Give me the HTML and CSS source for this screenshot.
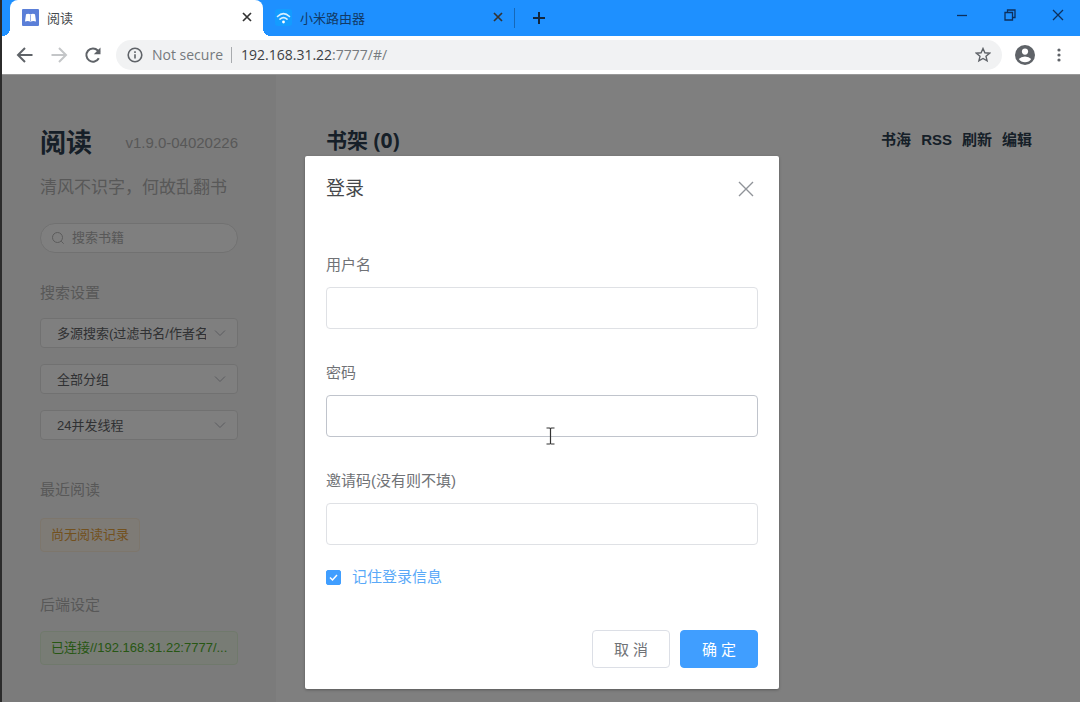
FILE: index.html
```html
<!DOCTYPE html>
<html lang="zh-CN">
<head>
<meta charset="utf-8">
<meta name="viewport" content="width=device-width, initial-scale=1">
<title>阅读</title>
<link rel="stylesheet" href="styles.css">
</head>
<body>
<header class="browser">
  <div class="tabstrip">
    <div class="tab tab-active">
      <svg class="favicon" viewBox="0 0 17 17" aria-hidden="true"><rect width="17" height="17" rx="1" fill="#5b7fd8"/><path d="M3 12.600L4 5.200Q6.500 4 8.500 5.600 10.500 4 13 5.200L14 12.600Q11 11.400 8.500 12.800 6 11.400 3 12.600z" fill="#fff"/><path d="M8.500 6v6.500" stroke="#8ea8e6" stroke-width=".9"/></svg>
      <span class="tab-title">阅读</span>
      <button class="tab-close" type="button" aria-label="关闭标签页"><svg viewBox="0 0 10 10"><path d="M1 1l8 8M9 1L1 9"/></svg></button>
    </div>
    <div class="tab">
      <svg class="favicon" viewBox="0 0 17 17" aria-hidden="true"><rect width="17" height="17" rx="3" fill="#149cff"/><path d="M2.500 7.500q6-5.600 12 0M5 10.200q3.500-3.200 7 0" fill="none" stroke="#d8f0ff" stroke-width="1.600" stroke-linecap="round"/><circle cx="8.500" cy="13" r="1.400" fill="#fff"/></svg>
      <span class="tab-title">小米路由器</span>
      <button class="tab-close" type="button" aria-label="关闭标签页"><svg viewBox="0 0 10 10"><path d="M1 1l8 8M9 1L1 9"/></svg></button>
    </div>
    <span class="tab-divider"></span>
    <button class="tab-new" type="button" aria-label="新标签页"><svg viewBox="0 0 14 14"><path d="M7 1v12M1 7h12"/></svg></button>
    <div class="window-buttons">
      <button type="button" aria-label="最小化"><svg viewBox="0 0 12 12"><path d="M1 6.500h10"/></svg></button>
      <button type="button" aria-label="还原"><svg viewBox="0 0 12 12"><path d="M1 3.500h7.500V11H1zM3.500 3.500V1H11v7.500H8.500"/></svg></button>
      <button type="button" aria-label="关闭"><svg viewBox="0 0 12 12"><path d="M1 1l10 10M11 1L1 11"/></svg></button>
    </div>
  </div>
  <div class="toolbar">
    <button class="nav" type="button" aria-label="后退"><svg viewBox="0 0 18 18"><path d="M16.500 9H2.500M9 2L2 9l7 7"/></svg></button>
    <button class="nav nav-off" type="button" aria-label="前进" disabled><svg viewBox="0 0 18 18"><path d="M1.500 9h14M9 2l7 7-7 7"/></svg></button>
    <button class="nav" type="button" aria-label="重新加载"><svg viewBox="0 0 18 18"><path d="M14.800 12.200A6.600 6.600 0 1 1 13.800 4.500L15.500 6.500"/><path d="M16.500 1.500v6.700H9.800z" fill="#5f6368" stroke="none"/></svg></button>
    <div class="omnibox">
      <svg class="info" viewBox="0 0 16 16" aria-hidden="true"><circle cx="8" cy="8" r="6.800"/><path d="M8 7.200v4.300M8 4.200v1.700"/></svg>
      <span class="secure">Not secure</span>
      <span class="url" role="textbox" aria-label="地址">192.168.31.22<span class="url-rest">:7777/#/</span></span>
      <button class="star" type="button" aria-label="收藏"><svg viewBox="0 0 16 16"><path d="M8 1.500l1.900 4.300 4.700.4-3.600 3.100 1.100 4.600L8 11.500l-4.100 2.400L5 9.300 1.400 6.200l4.700-.4z"/></svg></button>
    </div>
    <button class="avatar" type="button" aria-label="用户"><svg viewBox="0 0 20 20"><circle cx="10" cy="10" r="10" fill="#5f6368"/><circle cx="10" cy="6.600" r="3.100" fill="#fff"/><path d="M3.800 14Q6 11.400 10 11.400T16.200 14Q14 17.200 10 17.200T3.800 14z" fill="#fff"/></svg></button>
    <button class="more" type="button" aria-label="菜单"><svg viewBox="0 0 4 16"><circle cx="2" cy="3" r="1.600"/><circle cx="2" cy="8" r="1.600"/><circle cx="2" cy="13" r="1.600"/></svg></button>
  </div>
</header>

<div class="page">
  <aside class="sidebar">
    <div class="brand"><h1 class="brand-name">阅读</h1><span class="version">v1.9.0-04020226</span></div>
    <p class="tagline">清风不识字，何故乱翻书</p>
    <label class="search">
      <svg viewBox="0 0 14 14" aria-hidden="true"><circle cx="6.500" cy="6.500" r="5"/><path d="M10.200 10.200l2.500 2.500"/></svg>
      <input type="text" placeholder="搜索书籍" aria-label="搜索书籍">
    </label>
    <h2 class="group-title group-search">搜索设置</h2>
    <div class="selects">
      <div class="select"><select aria-label="搜索方式"><option>多源搜索(过滤书名/作者名)</option></select><svg viewBox="0 0 12 8" aria-hidden="true"><path d="M1 1.500l5 5 5-5"/></svg></div>
      <div class="select"><select aria-label="分组"><option>全部分组</option></select><svg viewBox="0 0 12 8" aria-hidden="true"><path d="M1 1.500l5 5 5-5"/></svg></div>
      <div class="select"><select aria-label="并发线程"><option>24并发线程</option></select><svg viewBox="0 0 12 8" aria-hidden="true"><path d="M1 1.500l5 5 5-5"/></svg></div>
    </div>
    <h2 class="group-title group-recent">最近阅读</h2>
    <div class="tag tag-warning">尚无阅读记录</div>
    <h2 class="group-title group-backend">后端设定</h2>
    <div class="tag tag-success">已连接//192.168.31.22:7777/...</div>
  </aside>
  <main class="shelf">
    <div class="shelf-head">
      <h2 class="shelf-title">书架 (0)</h2>
      <nav class="shelf-links"><a href="#">书海</a><a href="#">RSS</a><a href="#">刷新</a><a href="#">编辑</a></nav>
    </div>
  </main>

  <div class="overlay">
    <form class="dialog" role="dialog" aria-labelledby="dialog-title">
      <div class="dialog-head">
        <h2 class="dialog-title" id="dialog-title">登录</h2>
        <button class="dialog-close" type="button" aria-label="关闭"><svg viewBox="0 0 16 16"><path d="M1 1l14 14M15 1L1 15"/></svg></button>
      </div>
      <div class="fields">
        <div class="field"><label for="user">用户名</label><input id="user" type="text"></div>
        <div class="field field-hover"><label for="pass">密码</label><input id="pass" type="password">
          <svg class="ibeam" viewBox="0 0 9 18" aria-hidden="true"><path d="M.5 1h3l1 .5 1-.5h3M.5 17h3l1-.5 1 .5h3M4.500 1.500v15"/></svg></div>
        <div class="field"><label for="code">邀请码(没有则不填)</label><input id="code" type="text"></div>
      </div>
      <label class="remember"><span class="tick"><input type="checkbox" checked><svg viewBox="0 0 15 15" aria-hidden="true"><path d="M4 7.500l2.500 2.500L11 5"/></svg></span>记住登录信息</label>
      <div class="actions">
        <button class="btn" type="button">取 消</button>
        <button class="btn btn-primary" type="button">确 定</button>
      </div>
    </form>
  </div>
</div>
</body>
</html>
```

FILE: styles.css
```css
* { box-sizing: border-box; }

body {
  margin: 0;
  min-height: 100vh;
  display: flex;
  flex-direction: column;
  border-left: 2px solid #2b2b2b;
  background: #fff;
  font-family: "Liberation Sans", "Noto Sans CJK SC", sans-serif;
  font-size: 15px;
}
h1, h2, p { margin: 0; }
button { border: 0; padding: 0; background: none; font: inherit; color: inherit; }
svg { display: block; fill: none; }

/* Browser frame */
.browser { font-family: "Open Sans", "Noto Sans CJK SC", sans-serif; }
.tabstrip {
  display: flex;
  align-items: center;
  height: 36px;
  padding-left: 8px;
  background: #1e90ff;
}
.tab {
  position: relative;
  display: flex;
  align-items: center;
  flex: 0 1 251px;
  height: 36px;
  padding: 0 11px 2px 12px;
  font-size: 13px;
  color: #123a66;
}
.tab-active {
  flex-basis: 253px;
  background: #fff;
  border-radius: 8px 8px 0 0;
  color: #45494d;
}
.tab-active::before, .tab-active::after {
  content: "";
  position: absolute;
  bottom: 0;
  width: 8px;
  height: 8px;
}
.tab-active::before { right: 100%; background: radial-gradient(circle at 0 0, #1e90ff 8px, #fff 8px); }
.tab-active::after { left: 100%; background: radial-gradient(circle at 100% 0, #1e90ff 8px, #fff 8px); }
.favicon { width: 17px; height: 17px; }
.tab-title { flex: 1; margin-left: 8px; }
.tab-close svg { width: 10px; height: 10px; stroke: #333; stroke-width: 1.7; }
.tab-divider { width: 1px; height: 20px; background: #1668b8; }
.tab-new { margin-left: 17px; }
.tab-new svg { width: 14px; height: 14px; stroke: #12263c; stroke-width: 2; }
.window-buttons { display: flex; gap: 36px; margin: 0 16px 6px auto; }
.window-buttons svg { width: 12px; height: 12px; stroke: #0d2f5c; stroke-width: 1.3; }

.toolbar {
  display: flex;
  align-items: center;
  height: 38px;
  padding: 0 19px 0 14px;
  color: #5f6368;
}
.nav { margin-right: 16px; }
.nav + .nav + .nav { margin-right: 14px; }
.nav svg { width: 18px; height: 18px; stroke: #5f6368; stroke-width: 2; }
.nav-off svg { stroke: #c4c6c8; }
.omnibox {
  display: flex;
  align-items: center;
  flex: 1;
  height: 30px;
  padding: 0 11px;
  border-radius: 15px;
  background: #f1f2f3;
  font-size: 14px;
}
.info { width: 16px; height: 16px; stroke: #5f6368; stroke-width: 1.6; }
.secure { margin-left: 9px; padding-right: 8px; line-height: 16px; border-right: 1px solid #a8abae; color: #75797d; }
.url { flex: 1; margin-left: 9px; line-height: 16px; color: #3c4043; }
.url-rest { color: #777b7f; }
.star svg { width: 16px; height: 16px; stroke: #5f6368; stroke-width: 1.4; }
.avatar { margin-left: 13px; }
.avatar svg { width: 20px; height: 20px; }
.more { margin-left: 22px; }
.more svg { width: 4px; height: 16px; fill: #5f6368; }

/* Reader */
.page { position: relative; display: flex; flex: 1; border-top: 1px solid #999; }
.sidebar { width: 274px; padding: 48px 38px 36px; background: #f7f7f7; }
.brand { display: flex; align-items: center; justify-content: space-between; line-height: 40px; }
.brand-name { font-size: 26px; color: #2c3e50; }
.version { color: #b1b1b1; }
.tagline { margin-top: 12px; font-size: 17px; line-height: 26px; color: #b1b1b1; white-space: nowrap; }
.search {
  display: flex;
  align-items: center;
  gap: 7px;
  height: 30px;
  margin-top: 22px;
  padding: 0 10px;
  border: 1px solid #e3e3e3;
  border-radius: 15px;
  background: #fff;
}
.search svg { flex: none; width: 14px; height: 14px; stroke: #b8b8b8; }
.search input { width: 100%; min-width: 0; height: 26px; border: 0; padding: 0 0 2px; background: none; outline: 0; font: inherit; font-size: 13px; }
.search input::placeholder { color: #b0b0b0; }
.group-title { font-size: 15px; font-weight: 400; line-height: 20px; color: #b1b1b1; }
.group-search { margin: 30px 0 15px; }
.selects { display: grid; gap: 16px; }
.select { display: grid; align-items: center; }
.select select, .select svg { grid-area: 1 / 1; }
.select select {
  appearance: none;
  width: 100%;
  min-width: 0;
  height: 30px;
  padding: 0 31px 0 16px;
  border: 1px solid #e3e3e3;
  border-radius: 4px;
  background: #fff;
  font: inherit;
  font-size: 13px;
  color: #606266;
}
.select svg { justify-self: end; width: 12px; height: 8px; margin-right: 12px; stroke: #b5b8be; pointer-events: none; }
.group-recent { margin: 40px 0 18px; }
.group-backend { margin: 43px 0 16px; }
.tag {
  width: fit-content;
  max-width: 100%;
  white-space: nowrap;
  padding: 0 10px;
  border: 1px solid;
  border-radius: 4px;
  font-size: 13px;
  line-height: 32px;
}
.tag-warning { color: #e6a23c; background: #fdf6ec; border-color: #faecd8; }
.tag-success { color: #4fae28; background: #f0f9eb; border-color: #e1f3d8; }

.shelf { flex: 1; padding: 49px 48px 40px 50px; }
.shelf-head { display: flex; align-items: center; justify-content: space-between; line-height: 32px; color: #2c3e50; }
.shelf-title { font-family: "Open Sans", "Noto Sans CJK SC", sans-serif; font-size: 21px; }
.shelf-links { display: flex; gap: 10px; font-weight: 700; }
.shelf-links a { color: inherit; text-decoration: none; }

/* Login dialog */
.overlay {
  position: absolute;
  inset: 0;
  display: flex;
  justify-content: center;
  align-items: flex-start;
  padding: 81px 16px 13px 18px;
  background: rgba(0, 0, 0, .5);
}
.dialog {
  width: 100%;
  max-width: 474px;
  padding: 20px 21px 21px;
  border-radius: 2px;
  background: #fff;
  box-shadow: 0 1px 3px rgba(0, 0, 0, .3);
  color: #707276;
}
.dialog-head { display: flex; align-items: center; justify-content: space-between; }
.dialog-title { font-size: 19px; font-weight: 400; line-height: 26px; color: #45474a; }
.dialog-close { margin-right: 4px; }
.dialog-close svg { width: 16px; height: 16px; stroke: #909399; stroke-width: 1.4; }
.fields { display: grid; gap: 34px; margin-top: 53px; }
.field { position: relative; display: grid; gap: 12px; line-height: 20px; }
.field input {
  width: 100%;
  height: 42px;
  padding: 0 15px;
  border: 1px solid #dfe1e5;
  border-radius: 4px;
  background: #fff;
  font: inherit;
  outline: 0;
}
.field-hover input { border-color: #c0c4cc; }
.ibeam { position: absolute; left: 220px; bottom: -8px; width: 9px; height: 18px; stroke: #333; stroke-width: 1.2; }
.remember { display: flex; align-items: center; width: fit-content; margin-top: 22px; line-height: 20px; color: #5aa9f8; }
.tick { display: grid; margin-right: 11px; }
.tick input, .tick svg { grid-area: 1 / 1; width: 15px; height: 15px; margin: 0; }
.tick input { appearance: none; border: 1px solid #dcdfe6; border-radius: 2px; }
.tick input:checked { border-color: #409eff; background: #409eff; }
.tick svg { position: relative; stroke: #fff; stroke-width: 1.5; pointer-events: none; }
.actions { display: flex; justify-content: flex-end; gap: 10px; margin-top: 43px; }
.btn { width: 78px; height: 38px; padding-bottom: 2px; border: 1px solid #dcdfe6; border-radius: 4px; background: #fff; color: #707276; }
.btn-primary { border-color: #409eff; background: #409eff; color: #fff; }
```
